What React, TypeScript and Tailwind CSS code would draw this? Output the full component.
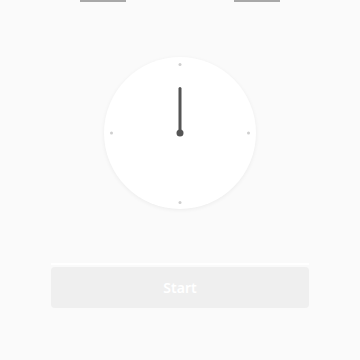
import React from 'react'

const ticks = [
  'top-[6px] left-1/2 -translate-x-1/2',
  'bottom-[5px] left-1/2 -translate-x-1/2',
  'left-[6px] top-1/2 -translate-y-1/2',
  'right-[6px] top-1/2 -translate-y-1/2',
]

export default function App() {
  return (
    <div className="w-[360px] h-[360px] bg-[#fafafa] flex flex-col items-center overflow-hidden" style={{ fontFamily: '"Noto Sans", Roboto, sans-serif' }}>
      {/* cut-off fields above */}
      <div className="flex gap-[108px]">
        <div className="w-[46px] h-[2px] bg-[#a8a8a8]" />
        <div className="w-[46px] h-[2px] bg-[#a8a8a8]" />
      </div>

      {/* clock face */}
      <div className="mt-[55px] relative w-[152px] h-[152px] rounded-full bg-white shadow-[0_1px_4px_rgba(0,0,0,0.06)] flex items-center justify-center">
        {ticks.map((t) => (
          <span key={t} className={`absolute w-[3px] h-[3px] rounded-full bg-[#cfcfcf] ${t}`} />
        ))}
        <div className="absolute left-1/2 top-[30px] -translate-x-1/2 w-[3px] h-[46px] bg-[#555] rounded-t-sm" />
        <div className="absolute left-1/2 top-1/2 -translate-x-1/2 -translate-y-1/2 w-[7px] h-[7px] rounded-full bg-[#555]" />
      </div>

      {/* start button */}
      <div className="mt-[54px] w-[258px] border-t-2 border-white pt-[2px]">
        <button className="w-full h-[41px] bg-[#efefef] rounded-sm text-white text-[14px] font-semibold">
          Start
        </button>
      </div>
    </div>
  )
}
